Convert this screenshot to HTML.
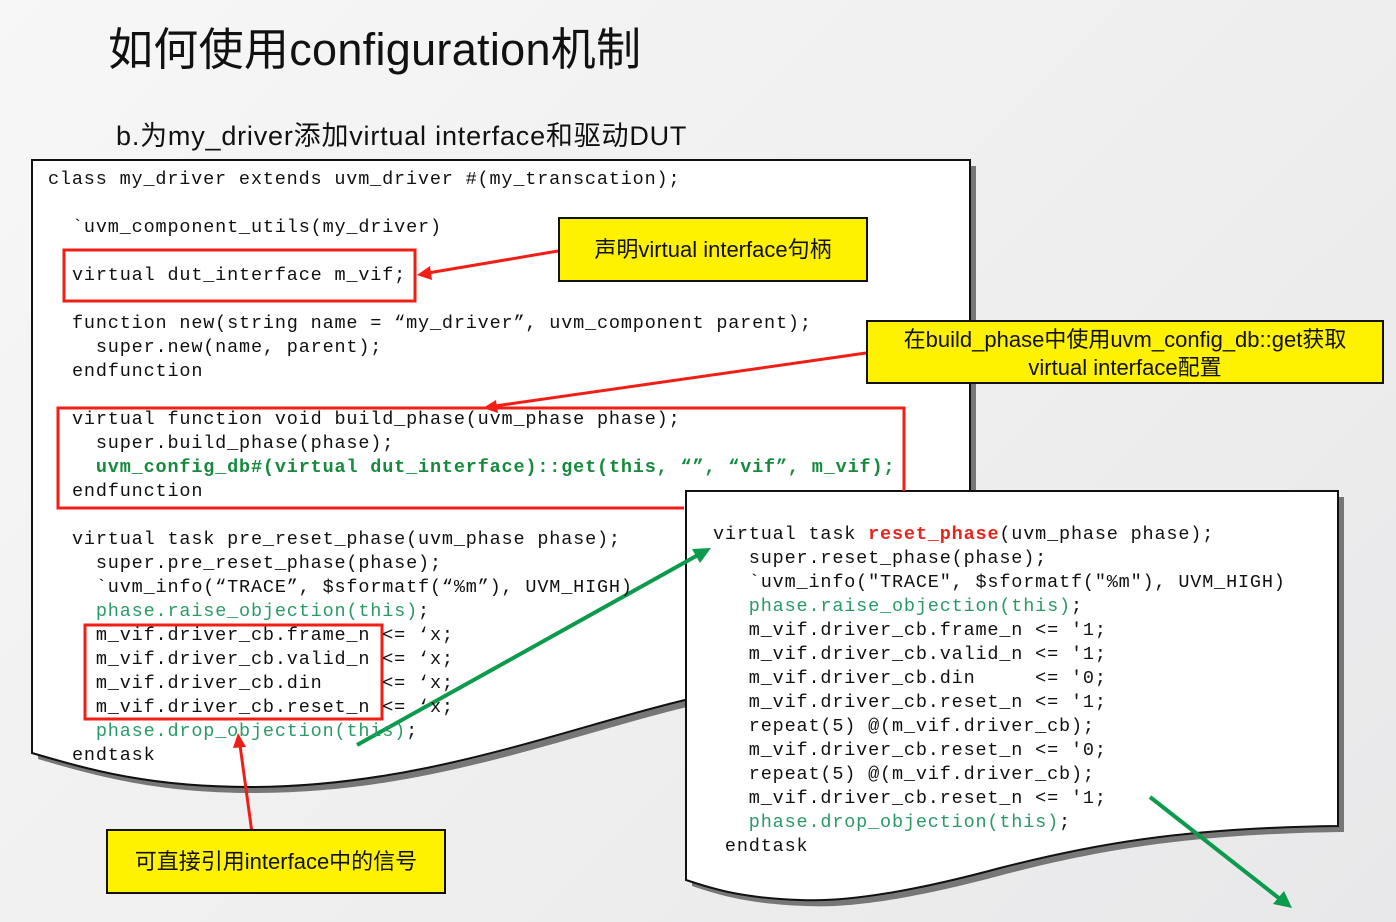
<!DOCTYPE html>
<html><head><meta charset="utf-8">
<style>
html,body{margin:0;padding:0}
body{width:1396px;height:922px;position:relative;overflow:hidden;background:linear-gradient(135deg,#f7f7f7 0%,#f0f0f0 45%,#e8e8ea 100%);font-family:"Liberation Sans","Noto Sans CJK SC",sans-serif}
.t{position:absolute;white-space:pre}
.c{position:absolute;white-space:pre;font-family:"Liberation Mono",monospace;font-size:18.5px;letter-spacing:0.83px;line-height:24px;color:#111}
.g{color:#2a9a64}
.gb{color:#168a3c;font-weight:bold}
.r{color:#e8241a;font-weight:bold}
.y{position:absolute;background:#fff200;border:2px solid #111;box-sizing:border-box;font-size:22px;color:#111;text-align:center}
</style></head><body>
<svg width="1396" height="922" style="position:absolute;left:0;top:0">
<path d="M38,166 L976,166 L976,706 L691,706 C566,736 426,793 256,793 C156,793 96,776 38,759 Z" fill="#777"/>
<path d="M32,160 L970,160 L970,700 L685,700 C560,730 420,787 250,787 C150,787 90,770 32,753 Z" fill="#fff" stroke="#111" stroke-width="2"/>
<path d="M692,497 L1344,497 L1344,832 C1186,834 1096,851 1006,874 C906,901 846,908 806,906 C746,904 716,894 692,886 Z" fill="#777"/>
<path d="M686,491 L1338,491 L1338,826 C1180,828 1090,845 1000,868 C900,895 840,902 800,900 C740,898 710,888 686,880 Z" fill="#fff" stroke="#111" stroke-width="2"/>
<rect x="64" y="250" width="351" height="51" fill="none" stroke="#f01e14" stroke-width="3"/>
<path d="M684,508 L58,508 L58,408 L904,408 L904,491" fill="none" stroke="#f01e14" stroke-width="3"/>
<rect x="85" y="625" width="297" height="94" fill="none" stroke="#f01e14" stroke-width="3"/>
<line x1="558" y1="251" x2="428" y2="273" stroke="#f01e14" stroke-width="3"/>
<polygon points="417,275 430,266 432,280" fill="#f01e14"/>
<line x1="866" y1="353" x2="495" y2="406" stroke="#f01e14" stroke-width="3"/>
<polygon points="483,408 496,400 498,413" fill="#f01e14"/>
<line x1="252" y1="833" x2="240" y2="745" stroke="#f01e14" stroke-width="3"/>
<polygon points="238,733 233,748 246,747" fill="#f01e14"/>
<line x1="357" y1="745" x2="698" y2="555" stroke="#0c9a4c" stroke-width="4"/>
<polygon points="711,548 692,549 700,563" fill="#0c9a4c"/>
<line x1="1150" y1="797" x2="1280" y2="899" stroke="#0c9a4c" stroke-width="4"/>
<polygon points="1292,908 1273,904 1284,891" fill="#0c9a4c"/>
</svg>
<div class="t" style="left:108px;top:13px;font-size:45px;color:#111;letter-spacing:0.3px">如何使用configuration机制</div>
<div class="t" style="left:116px;top:114px;font-size:27px;color:#111;letter-spacing:0.8px">b.为my_driver添加virtual interface和驱动DUT</div>

<div class="c" style="left:48px;top:168px">class my_driver extends uvm_driver #(my_transcation);</div>
<div class="c" style="left:72px;top:216px">`uvm_component_utils(my_driver)</div>
<div class="c" style="left:72px;top:264px">virtual dut_interface m_vif;</div>
<div class="c" style="left:72px;top:312px">function new(string name = “my_driver”, uvm_component parent);
  super.new(name, parent);
endfunction</div>
<div class="c" style="left:72px;top:408px">virtual function void build_phase(uvm_phase phase);
  super.build_phase(phase);
  <span class="gb">uvm_config_db#(virtual dut_interface)::get(this, “”, “vif”, m_vif);</span>
endfunction</div>
<div class="c" style="left:72px;top:528px">virtual task pre_reset_phase(uvm_phase phase);
  super.pre_reset_phase(phase);
  `uvm_info(“TRACE”, $sformatf(“%m”), UVM_HIGH)
  <span class="g">phase.raise_objection(this)</span>;
  m_vif.driver_cb.frame_n <= ‘x;
  m_vif.driver_cb.valid_n <= ‘x;
  m_vif.driver_cb.din     <= ‘x;
  m_vif.driver_cb.reset_n <= ‘x;
  <span class="g">phase.drop_objection(this)</span>;
endtask</div>

<div class="c" style="left:713px;top:523px">virtual task <span class="r">reset_phase</span>(uvm_phase phase);
   super.reset_phase(phase);
   `uvm_info("TRACE", $sformatf("%m"), UVM_HIGH)
   <span class="g">phase.raise_objection(this)</span>;
   m_vif.driver_cb.frame_n <= '1;
   m_vif.driver_cb.valid_n <= '1;
   m_vif.driver_cb.din     <= '0;
   m_vif.driver_cb.reset_n <= '1;
   repeat(5) @(m_vif.driver_cb);
   m_vif.driver_cb.reset_n <= '0;
   repeat(5) @(m_vif.driver_cb);
   m_vif.driver_cb.reset_n <= '1;
   <span class="g">phase.drop_objection(this)</span>;
 endtask</div>

<div class="y" style="left:558px;top:217px;width:310px;height:65px;line-height:61px">声明virtual interface句柄</div>
<div class="y" style="left:866px;top:320px;width:518px;height:64px;line-height:28px;padding-top:4px">在build_phase中使用uvm_config_db::get获取<br>virtual interface配置</div>
<div class="y" style="left:106px;top:829px;width:340px;height:65px;line-height:61px">可直接引用interface中的信号</div>
</body></html>
